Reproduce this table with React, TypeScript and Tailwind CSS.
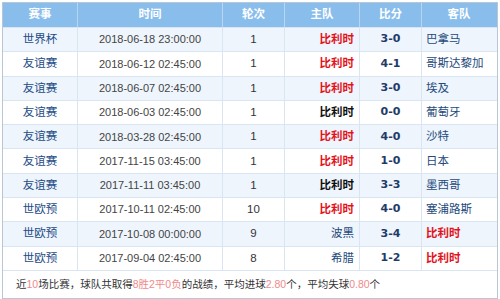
import React from 'react';

type Match = {
  event: string;
  time: string;
  round: string;
  home: string;
  score: string;
  away: string;
  // which side is Belgium, and whether it is shown in red
  side: 'home' | 'away';
  red: boolean;
};

const matches: Match[] = [
  { event: '世界杯', time: '2018-06-18 23:00:00', round: '1', home: '比利时', score: '3-0', away: '巴拿马', side: 'home', red: true },
  { event: '友谊赛', time: '2018-06-12 02:45:00', round: '1', home: '比利时', score: '4-1', away: '哥斯达黎加', side: 'home', red: true },
  { event: '友谊赛', time: '2018-06-07 02:45:00', round: '1', home: '比利时', score: '3-0', away: '埃及', side: 'home', red: true },
  { event: '友谊赛', time: '2018-06-03 02:45:00', round: '1', home: '比利时', score: '0-0', away: '葡萄牙', side: 'home', red: false },
  { event: '友谊赛', time: '2018-03-28 02:45:00', round: '1', home: '比利时', score: '4-0', away: '沙特', side: 'home', red: true },
  { event: '友谊赛', time: '2017-11-15 03:45:00', round: '1', home: '比利时', score: '1-0', away: '日本', side: 'home', red: true },
  { event: '友谊赛', time: '2017-11-11 03:45:00', round: '1', home: '比利时', score: '3-3', away: '墨西哥', side: 'home', red: false },
  { event: '世欧预', time: '2017-10-11 02:45:00', round: '10', home: '比利时', score: '4-0', away: '塞浦路斯', side: 'home', red: true },
  { event: '世欧预', time: '2017-10-08 00:00:00', round: '9', home: '波黑', score: '3-4', away: '比利时', side: 'away', red: true },
  { event: '世欧预', time: '2017-09-04 02:45:00', round: '8', home: '希腊', score: '1-2', away: '比利时', side: 'away', red: true },
];

const cols = 'grid grid-cols-[75px_145px_62px_75px_62px_74px]';
const font = { fontFamily: '"Liberation Sans", "Noto Sans CJK SC", sans-serif' };

const teamClass = (m: Match, side: 'home' | 'away') => {
  if (m.side !== side) return 'text-[#24497a]';
  return m.red ? 'font-bold text-[#e3131b]' : 'font-bold text-[#111111]';
};

const Hl: React.FC<{ children: React.ReactNode }> = ({ children }) => (
  <span className="text-[#f08a8a]">{children}</span>
);

export default function App() {
  return (
    <div className="w-[500px] h-[299px] bg-white p-[2px]" style={font}>
      <div className="border border-[#b9c6d3] text-[11.5px]">
        <div className={`${cols} h-[24px] bg-[#89bdeb] text-white font-bold`}>
          {['赛事', '时间', '轮次', '主队', '比分', '客队'].map((h, i) => (
            <div
              key={h}
              className={`flex items-center justify-center ${i < 5 ? 'border-r border-[#b8d6f2]' : ''}`}
            >
              {h}
            </div>
          ))}
        </div>

        {matches.map((m, i) => (
          <div
            key={m.time}
            className={`${cols} h-[24.3px] border-t border-[#d9e5f1] ${i % 2 === 0 ? 'bg-[#eef5fd]' : 'bg-white'}`}
          >
            <div className="flex items-center justify-center border-r border-[#d9e5f1] text-[#1d4b86]">{m.event}</div>
            <div className="flex items-center justify-center border-r border-[#d9e5f1] text-[11px] text-[#444444]">{m.time}</div>
            <div className="flex items-center justify-center border-r border-[#d9e5f1] text-[#333333]">{m.round}</div>
            <div className={`flex items-center justify-end pr-[5px] border-r border-[#d9e5f1] ${teamClass(m, 'home')}`}>{m.home}</div>
            <div
              className="flex items-center justify-center border-r border-[#d9e5f1] font-bold text-[11px] text-[#1f3c68]"
              style={{ fontFamily: '"DejaVu Sans", sans-serif' }}
            >
              {m.score}
            </div>
            <div className={`flex items-center pl-[4px] ${teamClass(m, 'away')}`}>{m.away}</div>
          </div>
        ))}

        <div className="h-[28px] flex items-center pl-[13px] border-t border-[#d9e5f1] text-[#333333] text-[10.5px]">
          <span>
            近<Hl>10</Hl>场比赛，球队共取得<Hl>8胜2平0负</Hl>的战绩，平均进球<Hl>2.80</Hl>个，平均失球<Hl>0.80</Hl>个
          </span>
        </div>
      </div>
    </div>
  );
}
